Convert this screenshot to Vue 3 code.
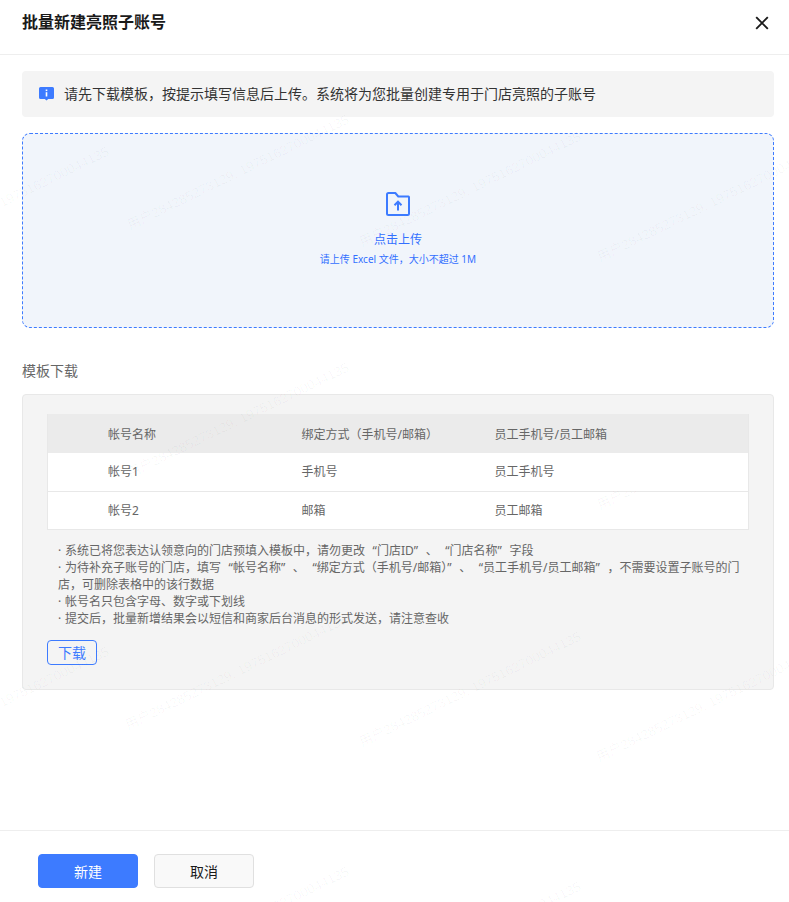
<script setup>
const columns = ['帐号名称', '绑定方式（手机号/邮箱）', '员工手机号/员工邮箱']
const rows = [
  ['帐号1', '手机号', '员工手机号'],
  ['帐号2', '邮箱', '员工邮箱'],
]
const notes = [
  '系统已将您表达认领意向的门店预填入模板中，请勿更改 “门店ID” 、 “门店名称” 字段',
  '为待补充子账号的门店，填写 “帐号名称” 、 “绑定方式（手机号/邮箱）” 、 “员工手机号/员工邮箱” ，不需要设置子账号的门店，可删除表格中的该行数据',
  '帐号名只包含字母、数字或下划线',
  '提交后，批量新增结果会以短信和商家后台消息的形式发送，请注意查收',
]
const marks = [
  { x: -110, y: 262 }, { x: 130, y: 230 }, { x: 362, y: 247 }, { x: 600, y: 262 },
  { x: 130, y: 478 }, { x: 600, y: 510, clip: true },
  { x: -110, y: 762 }, { x: 128, y: 730 }, { x: 362, y: 747 }, { x: 599, y: 762 },
  { x: 130, y: 982 }, { x: 362, y: 997 },
]
</script>

<template>
  <div class="dialog">
    <header class="head">
      <h1 class="title">批量新建亮照子账号</h1>
      <svg class="close" width="14" height="14" viewBox="0 0 14 14"><path d="M1.2 1.2 12.8 12.8M12.8 1.2 1.2 12.8" stroke="#1a1a1a" stroke-width="1.9" fill="none"/></svg>
    </header>
    <main class="body">
      <div class="tip">
        <svg class="tip-icon" width="15" height="14" viewBox="0 0 15 14"><path d="M1.500 0h12A1.500 1.500 0 0 1 15 1.500v9a1.500 1.500 0 0 1-1.500 1.500H9.200L7.500 13.500 5.800 12H1.500A1.500 1.500 0 0 1 0 10.500v-9A1.500 1.500 0 0 1 1.500 0Z" fill="#3d7bff"/><rect x="6.700" y="5.200" width="1.600" height="4.300" fill="#fff"/><rect x="6.700" y="2.500" width="1.600" height="1.600" fill="#fff"/></svg>
        <span class="tip-text">请先下载模板，按提示填写信息后上传。系统将为您批量创建专用于门店亮照的子账号</span>
      </div>
      <div class="upload">
        <svg class="upload-icon" width="24" height="24" viewBox="0 0 24 24" fill="none"><path d="M1 2.500A1.500 1.500 0 0 1 2.500 1h6.800l3 3.500h10.200A1.500 1.500 0 0 1 23 6v15.500a1.500 1.500 0 0 1-1.500 1.500h-19A1.500 1.500 0 0 1 1 21.500Z" stroke="#3d7bff" stroke-width="2" stroke-linejoin="round"/><path d="M12 18.500v-8.500M8.500 13.200 12 9.700l3.500 3.500" stroke="#3d7bff" stroke-width="2"/></svg>
        <div class="upload-main">点击上传</div>
        <div class="upload-sub">请上传 Excel 文件，大小不超过 1M</div>
      </div>
      <div class="section-label">模板下载</div>
      <section class="panel">
        <table class="table">
          <thead>
            <tr><th v-for="col in columns" :key="col">{{ col }}</th></tr>
          </thead>
          <tbody>
            <tr v-for="row in rows" :key="row[0]"><td v-for="cell in row" :key="cell">{{ cell }}</td></tr>
          </tbody>
        </table>
        <div class="notes">
          <div v-for="note in notes" :key="note"><span class="dot">·</span>{{ note }}</div>
        </div>
        <button class="download" type="button">下载</button>
      </section>
    </main>
    <footer class="foot">
      <button class="btn primary" type="button">新建</button>
      <button class="btn" type="button">取消</button>
    </footer>
    <svg class="watermark" width="789" height="902" aria-hidden="true">
      <defs><clipPath id="wm-row"><rect x="0" y="491" width="789" height="60"/></clipPath></defs>
      <g v-for="m in marks" :key="m.x + '-' + m.y" :clip-path="m.clip ? 'url(#wm-row)' : null">
        <text :x="m.x" :y="m.y" :transform="`rotate(-26 ${m.x} ${m.y})`">用户284285273129: 1975162700044135</text>
      </g>
    </svg>
  </div>
</template>

<style>
html, body { margin: 0; background: #fff; }
</style>

<style scoped>
.dialog {
  position: relative;
  width: 789px;
  height: 902px;
  overflow: hidden;
  display: flex;
  flex-direction: column;
  background: #fff;
  font-family: "Noto Sans", "Noto Sans CJK SC", sans-serif;
  color: #666;
}
.head {
  height: 55px;
  flex: none;
  box-sizing: border-box;
  border-bottom: 1px solid #eee;
  display: flex;
  align-items: center;
  justify-content: space-between;
  padding: 0 20px 11px 22px;
}
.title { margin: 0; font-size: 16px; line-height: 24px; font-weight: 700; color: #1a1a1a; }
.close { margin-top: 2px; }
.body { flex: 1; padding: 16px 15px 0 22px; }
.tip {
  height: 46px;
  border-radius: 4px;
  background: #f4f4f4;
  display: flex;
  align-items: center;
  gap: 10px;
  padding-left: 17px;
  font-size: 14px;
  color: #333;
}
.tip-text { margin-top: -2px; }
.upload {
  box-sizing: border-box;
  height: 195px;
  margin-top: 16px;
  border: 1px dashed #3d7bff;
  border-radius: 8px;
  background: #f1f5fb;
  display: flex;
  flex-direction: column;
  align-items: center;
  color: #3370ff;
}
.upload-icon { margin-top: 58px; }
.upload-main { margin-top: 15px; font-size: 12px; line-height: 18px; }
.upload-sub { margin-top: 3px; font-size: 10px; line-height: 15px; }
.section-label { margin-top: 33px; font-size: 14px; line-height: 20px; color: #666; }
.panel {
  box-sizing: border-box;
  height: 296px;
  margin-top: 13px;
  padding: 19px 24px 0;
  border: 1px solid #e8e8e8;
  border-radius: 4px;
  background: #f4f4f4;
}
.table {
  width: 100%;
  table-layout: fixed;
  border-collapse: collapse;
  background: #fff;
  font-size: 12px;
  color: #666;
}
.table th, .table td {
  text-align: left;
  font-weight: 400;
  padding: 0 0 1px;
  box-sizing: border-box;
  border-bottom: 1px solid #e8e8e8;
}
.table th { height: 39px; background: #ebebeb; border-bottom: 0; padding-bottom: 0; }
.table td { height: 38px; }
.table tr > :first-child { width: 254px; padding-left: 60px; border-left: 1px solid #e8e8e8; }
.table tr > :nth-child(2) { width: 193px; }
.table tr > :last-child { border-right: 1px solid #e8e8e8; }
.notes { margin-top: 12px; padding: 0 3px 0 11px; font-size: 12px; line-height: 17px; color: #666; word-spacing: 4.5px; }
.dot { display: inline-block; width: 7px; }
.download {
  display: block;
  width: 50px;
  height: 25px;
  margin-top: 13px;
  padding: 0;
  border: 1px solid #3d7bff;
  border-radius: 4px;
  background: transparent;
  color: #3d7bff;
  font: inherit;
  font-size: 14px;
}
.foot {
  flex: none;
  height: 72px;
  box-sizing: border-box;
  border-top: 1px solid #eee;
  display: flex;
  gap: 16px;
  padding: 23px 0 0 38px;
}
.btn {
  width: 100px;
  height: 34px;
  padding: 0;
  box-sizing: border-box;
  border: 1px solid #e0e0e0;
  border-radius: 4px;
  background: #f9f9f9;
  color: #1a1a1a;
  font: inherit;
  font-size: 14px;
}
.btn.primary { border-color: #3d7bff; background: #3d7bff; color: #fff; }
.watermark { position: absolute; inset: 0; pointer-events: none; }
.watermark text { font-family: "Liberation Sans", "Noto Sans CJK SC", sans-serif; font-size: 13.5px; fill: rgba(0, 0, 40, 0.035); }
</style>
